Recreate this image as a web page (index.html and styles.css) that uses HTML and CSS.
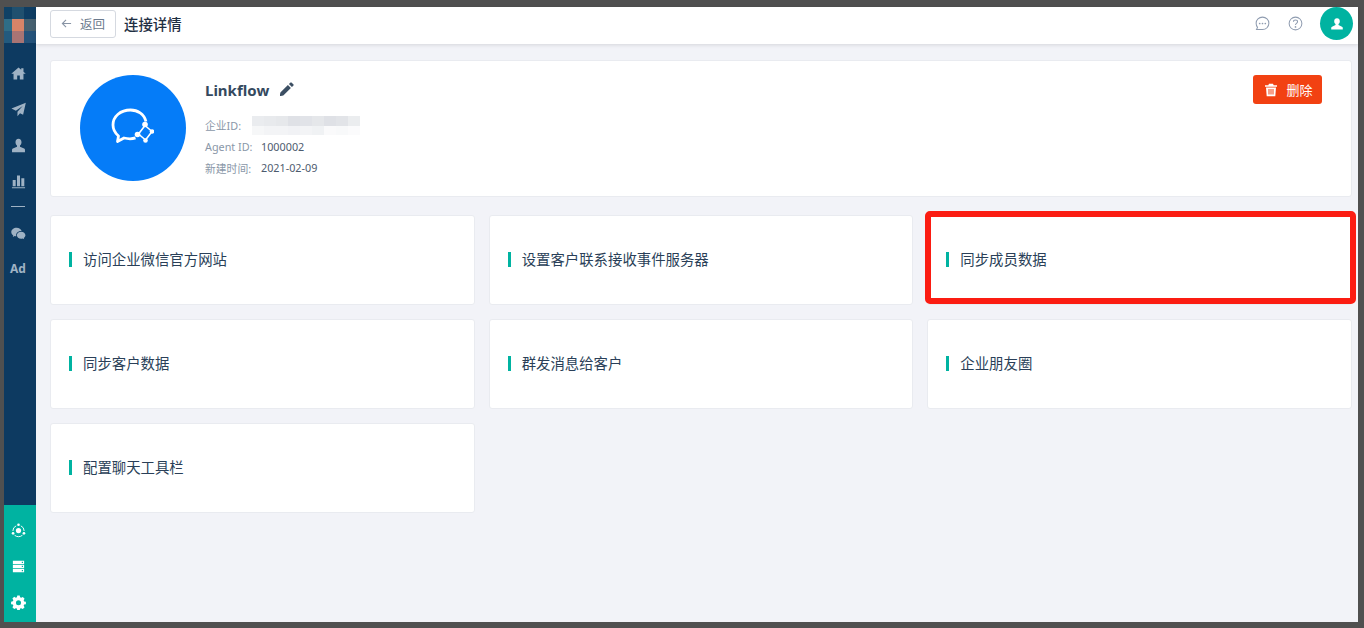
FILE: index.html
```html
<!DOCTYPE html>
<html lang="zh">
<head>
<meta charset="utf-8">
<title>连接详情</title>
<link rel="stylesheet" href="styles.css">
</head>
<body>
<div class="frame">
  <aside class="sidebar">
    <div class="logo">
      <i class="m1"></i><i class="m2"></i><i class="m3"></i>
      <i class="m4"></i><i class="m5"></i><i class="m6"></i>
      <i class="m7"></i><i class="m8"></i><i class="m9"></i>
    </div>
    <nav class="nav">
      <svg class="nav-icon" viewBox="0 0 16 16"><path d="M8 1.500 .3 8.300h2.400v6.200h3.900V10h2.800v4.500h3.900V8.300h2.400L13.300 6.200V2.400h-2.400v1.700z"/></svg>
      <svg class="nav-icon" viewBox="0 0 16 16"><path d="M15.800.8.500 6.800l4.700 2.400 7.300-5-5.600 6.100v5l2.700-3.300 3.300 1.700z"/></svg>
      <svg class="nav-icon" viewBox="0 0 16 16"><path d="M8 .8c-2 0-3.200 1.600-3.200 3.600 0 1.500.7 2.900 1.600 3.700v1.300L2 11.300c-.6.300-.9.700-.9 1.300v2.600h13.800v-2.600c0-.6-.3-1-.9-1.300L9.600 9.400V8.100c.9-.8 1.600-2.200 1.600-3.700C11.200 2.400 10 .8 8 .8z"/></svg>
      <svg class="nav-icon" viewBox="0 0 16 16"><path d="M1.800 6.500h3.200V13H1.800zM6.400 1.500h3.200V13H6.400zM11 4.500h3.200V13H11zM1 14h14v1.300H1z"/></svg>
      <div class="nav-line"></div>
      <svg class="nav-icon" viewBox="0 0 16 16"><path d="M6 1.800C2.900 1.800.3 3.800.3 6.400c0 1.500.8 2.700 2.100 3.600L1.900 11.600l2-1c.6.200 1.200.3 1.800.3-.1-.4-.2-.7-.2-1.100 0-2.500 2.400-4.500 5.300-4.500h.5C10.800 3.200 8.600 1.800 6 1.800z"/><path d="M10.800 6.100c-2.500 0-4.600 1.700-4.600 3.700s2.100 3.700 4.600 3.700c.5 0 1.100-.1 1.600-.2l1.700.9-.5-1.500c1-.7 1.800-1.700 1.800-2.900 0-2-2.100-3.700-4.600-3.700z"/></svg>
      <span class="nav-ad">Ad</span>
    </nav>
    <div class="nav-bottom">
      <svg class="nav-icon white" viewBox="0 0 16 16"><circle cx="8" cy="8" r="2.800"/><circle cx="8" cy="1.900" r="1.400"/><circle cx="2.200" cy="11" r="1.400"/><circle cx="13.800" cy="11" r="1.400"/><path class="ring" d="M2 8.500A6 6 0 0 1 5.500 3M10.500 3A6 6 0 0 1 14 8.500M3.800 13a6.300 6.300 0 0 0 8.400 0"/></svg>
      <svg class="nav-icon white" viewBox="0 0 16 16"><path fill-rule="evenodd" d="M2 1.800h12v3.600H2zm9.500 1v1.400h1.300V2.800zM2 6.200h12v3.600H2zm9.500 1v1.400h1.300V7.200zM2 10.600h12v3.600H2zm9.500 1V13h1.300v-1.400z"/></svg>
      <svg class="nav-icon white" viewBox="0 0 16 16"><path fill-rule="evenodd" d="M6.700.6h2.600l.4 1.900 1.200.5 1.700-1 1.900 1.900-1 1.700.5 1.200 1.900.4v2.600l-1.900.4-.5 1.200 1 1.700-1.900 1.900-1.700-1-1.200.5-.4 1.900H6.700l-.4-1.900-1.200-.5-1.700 1-1.900-1.900 1-1.700-.5-1.200-1.900-.4V7.100l1.900-.4.500-1.200-1-1.700 1.900-1.900 1.700 1 1.200-.5zM8 5.600a2.700 2.700 0 1 0 0 5.400 2.700 2.700 0 0 0 0-5.400z"/></svg>
    </div>
  </aside>

  <div class="main">
    <header class="topbar">
      <button class="back">
        <svg class="back-arrow" viewBox="0 0 12 12"><path d="M11 6H1.500M5.500 2 1.500 6l4 4"/></svg>
        <span>返回</span>
      </button>
      <h1 class="page-title">连接详情</h1>
      <div class="top-actions">
        <svg class="top-icon" viewBox="0 0 16 16"><path class="line" d="M8 1.200c3.800 0 6.800 2.900 6.800 6.600s-3 6.700-6.800 6.700H1.600l1.100-2.300C1.700 11 1.200 9.500 1.200 7.800 1.200 4.100 4.200 1.200 8 1.200z"/><circle class="dot" cx="5" cy="8" r=".9"/><circle class="dot" cx="8" cy="8" r=".9"/><circle class="dot" cx="11" cy="8" r=".9"/></svg>
        <svg class="top-icon" viewBox="0 0 16 16"><circle class="line" cx="8" cy="8" r="6.800"/><path class="line" d="M5.800 6.200c0-1.200 1-2 2.200-2s2.200.8 2.200 2c0 1.700-2.200 1.700-2.200 3.400"/><circle class="dot" cx="8" cy="11.600" r=".9"/></svg>
        <div class="avatar">
          <svg class="avatar-icon" viewBox="0 0 16 16"><path d="M8 1.500c-2 0-3.200 1.500-3.200 3.300 0 1.400.6 2.600 1.500 3.300v1.100l-4 1.800c-.6.300-.9.700-.9 1.300v2.100h13.200v-2.100c0-.6-.3-1-.9-1.300l-4-1.800V8.100c.9-.7 1.500-1.900 1.500-3.300C11.200 3 10 1.500 8 1.500z"/></svg>
        </div>
      </div>
    </header>

    <section class="content">
      <div class="profile card">
        <div class="circle">
          <svg class="circle-icon" viewBox="0 0 44 40">
            <path class="chat" d="M36 14.500C34 7 27.500 3 20.500 3 10.500 3 3 9.500 3 18c0 4.500 2 8 5.500 11l-1 5.500 6.500-3.500c4 1 8 1.100 11.500-.1"/>
            <path class="chat thin" d="M35 18.500 42 24.500 35.500 33 28.500 27z"/>
            <circle class="node" cx="35" cy="17.500" r="2.800"/><circle class="node" cx="42" cy="24.500" r="2.300"/><circle class="node" cx="35.500" cy="33.500" r="2.300"/><circle class="node" cx="27.500" cy="27.500" r="2.800"/>
          </svg>
        </div>
        <div class="info">
          <div class="name-row">
            <h2 class="name">Linkflow</h2>
            <svg class="pencil" viewBox="0 0 14 14"><path d="M10.300.7a1 1 0 0 1 1.400 0l1.600 1.600a1 1 0 0 1 0 1.400l-1.400 1.400-3-3zM7.900 2.900l3 3-7.600 7.600-3.600.7.700-3.700z"/></svg>
          </div>
          <div class="meta">
            <div class="meta-row"><span class="meta-label short">企业ID:</span>
              <span class="blur">
                <i class="b1"></i><i class="b2"></i><i class="b3"></i><i class="b4"></i><i class="b5"></i><i class="b6"></i><i class="b7"></i><i class="b8"></i><i class="b9"></i>
                <i class="c1"></i><i class="c2"></i><i class="c3"></i><i class="c4"></i><i class="c5"></i><i class="c6"></i><i class="c7"></i><i class="c8"></i><i class="c9"></i>
              </span>
            </div>
            <div class="meta-row"><span class="meta-label">Agent ID:</span><span class="meta-value">1000002</span></div>
            <div class="meta-row"><span class="meta-label">新建时间:</span><span class="meta-value">2021-02-09</span></div>
          </div>
        </div>
        <button class="delete">
          <svg class="trash" viewBox="0 0 14 14"><path fill-rule="evenodd" d="M5 .8h4l.7 1.400H13v1.500H1V2.200h3.300zM2 4.600h10l-.7 8.600H2.700zm2.500 1.500v5.500h1V6.100zm2 0v5.500h1V6.100zm2 0v5.500h1V6.100z"/></svg>
          <span>删除</span>
        </button>
      </div>

      <div class="grid">
        <a class="tile card"><span class="tile-label">访问企业微信官方网站</span></a>
        <a class="tile card"><span class="tile-label">设置客户联系接收事件服务器</span></a>
        <a class="tile card marked"><span class="tile-label">同步成员数据</span></a>
        <a class="tile card"><span class="tile-label">同步客户数据</span></a>
        <a class="tile card"><span class="tile-label">群发消息给客户</span></a>
        <a class="tile card"><span class="tile-label">企业朋友圈</span></a>
        <a class="tile card"><span class="tile-label">配置聊天工具栏</span></a>
      </div>
    </section>
  </div>
</div>
</body>
</html>
```

FILE: styles.css
```css
* { box-sizing: border-box; }
html, body { margin: 0; padding: 0; height: 100%; overflow: hidden; }
body {
  font-family: "Noto Sans", "Noto Sans CJK SC", sans-serif;
  color: #2a3f58;
}
.frame {
  display: flex;
  width: 1364px;
  height: 628px;
  border-style: solid;
  border-color: #505050;
  border-width: 7px 6px 6px 4px;
  background: #f2f3f8;
}
.sidebar {
  width: 32px;
  flex: none;
  display: flex;
  flex-direction: column;
  background: #0d3a61;
}
.logo {
  height: 36px;
  display: grid;
  grid-template-columns: 8px 12px 12px;
  grid-template-rows: 12px 12px 12px;
}
.logo i { display: block; }
.m1 { background: #0f4165; }
.m2 { background: #20506f; }
.m3 { background: #0e3d63; }
.m4 { background: #2f6d87; }
.m5 { background: #d98468; }
.m6 { background: #466070; }
.m7 { background: #235a7e; }
.m8 { background: #a87474; }
.m9 { background: #24527a; }
.nav {
  flex: 1;
  display: flex;
  flex-direction: column;
  align-items: center;
  padding: 23px 4px 0 0;
  gap: 21px;
}
.nav-icon { width: 15px; height: 15px; fill: #9fb2c4; flex: none; }
.nav-line { width: 14px; height: 1px; background: #9fb2c4; margin: -4px 0 -2px; }
.nav-ad {
  font-size: 12px;
  line-height: 14px;
  font-weight: 700;
  color: #9fb2c4;
}
.nav-bottom {
  height: 117px;
  background: #00b3a1;
  display: flex;
  flex-direction: column;
  align-items: center;
  padding: 18px 4px 0 0;
  gap: 21px;
}
.nav-icon.white { fill: #fff; }
.ring { fill: none; stroke: #fff; stroke-width: 1; }

.main { flex: 1; min-width: 0; display: flex; flex-direction: column; }
.topbar {
  height: 37px;
  flex: none;
  display: flex;
  align-items: center;
  padding: 0 5px 0 14px;
  background: #fff;
  box-shadow: 0 1px 4px rgba(0, 0, 0, .12);
}
.back {
  width: 66px;
  height: 28px;
  margin-top: -4px;
  display: flex;
  align-items: center;
  justify-content: center;
  gap: 8px;
  padding: 0;
  border: 1px solid #d5d9e0;
  border-radius: 3px;
  background: #fff;
  font: inherit;
  font-size: 12.500px;
  color: #6b7a8d;
}
.back-arrow { width: 11px; height: 11px; fill: none; stroke: #8894a5; stroke-width: 1.2; }
.page-title {
  margin: -5px 0 0 8px;
  font-size: 14.400px;
  font-weight: 500;
  color: #1f2f43;
}
.top-actions { margin: -4px 0 0 auto; display: flex; align-items: center; }
.top-icon { width: 15px; height: 15px; margin-right: 18px; }
.top-icon:nth-child(2) { margin-right: 17px; }
.line { fill: none; stroke: #8f9cb0; stroke-width: 1.100; }
.dot { fill: #8f9cb0; }
.avatar {
  width: 33px;
  height: 33px;
  border-radius: 50%;
  background: #00b3a1;
  display: flex;
  align-items: center;
  justify-content: center;
}
.avatar-icon { width: 14px; height: 14px; fill: #fff; }

.content { flex: 1; padding: 16px 6px 0 14px; }
.card {
  background: #fff;
  border: 1px solid #e9ebf0;
  border-radius: 3px;
}
.profile {
  height: 137px;
  display: flex;
  align-items: flex-start;
  padding: 14px 29px 0 29px;
}
.circle {
  width: 106px;
  height: 106px;
  flex: none;
  border-radius: 50%;
  background: #057cf8;
  display: flex;
  align-items: center;
  justify-content: center;
}
.circle-icon { width: 44px; height: 40px; margin: -3px 0 0 -3px; }
.chat { fill: none; stroke: #fff; stroke-width: 2.800; stroke-linejoin: round; }
.chat.thin { stroke-width: 1.600; }
.node { fill: #fff; }
.info { margin-left: 19px; }
.name-row { display: flex; align-items: center; gap: 11px; height: 30px; }
.name {
  margin: 0;
  font-size: 15px;
  line-height: 30px;
  font-weight: 700;
  color: #34495e;
}
.pencil { width: 14px; height: 14px; fill: #3c4f63; margin-top: -2px; }
.meta { margin-top: 9px; }
.meta-row {
  display: flex;
  align-items: center;
  height: 21.5px;
  font-size: 10.800px;
}
.meta-label { color: #8a97a8; width: 56px; flex: none; white-space: nowrap; }
.meta-label.short { width: 47px; }
.meta-value { color: #4d5b6e; }
.blur {
  display: grid;
  grid-template-columns: repeat(9, 12px);
  grid-template-rows: 10px 9px;
  margin-bottom: -1px;
}
.blur i { display: block; }
.b1 { background: #eaecef; } .b2 { background: #e8eaed; } .b3 { background: #e6e8eb; }
.b4 { background: #dfe1e6; } .b5 { background: #e1e3e8; } .b6 { background: #e5e7ea; }
.b7 { background: #dfe1e6; } .b8 { background: #e2e4e8; } .b9 { background: #ebedef; }
.c1 { background: #f6f7f8; } .c2 { background: #f3f4f6; } .c3 { background: #f3f4f6; }
.c4 { background: #f1f2f5; } .c5 { background: #f3f4f6; } .c6 { background: #f0f2f4; }
.c7 { background: #fafafb; } .c8 { background: #f8f9fa; } .c9 { background: #fbfbfc; }
.delete {
  margin-left: auto;
  width: 69px;
  height: 29px;
  display: flex;
  align-items: center;
  justify-content: center;
  gap: 8px;
  padding: 0 0 0 2px;
  border: 0;
  border-radius: 3px;
  background: #f24112;
  font: inherit;
  font-size: 13px;
  color: #fff;
}
.trash { width: 14px; height: 14px; fill: #fff; }

.grid {
  display: grid;
  grid-template-columns: repeat(3, 1fr);
  grid-auto-rows: 90px;
  gap: 14px;
  margin-top: 18px;
}
.tile { display: flex; align-items: center; padding: 0 0 1px 18px; position: relative; }
.tile-label {
  border-left: 3px solid #00b3a1;
  padding-left: 11px;
  font-size: 14.400px;
  line-height: 15px;
  color: #2a3f58;
}
.marked::after {
  content: "";
  position: absolute;
  left: -3px;
  top: -5px;
  right: -5px;
  bottom: 0;
  border: 6px solid #fb1c12;
  border-radius: 5px;
  pointer-events: none;
}
```
